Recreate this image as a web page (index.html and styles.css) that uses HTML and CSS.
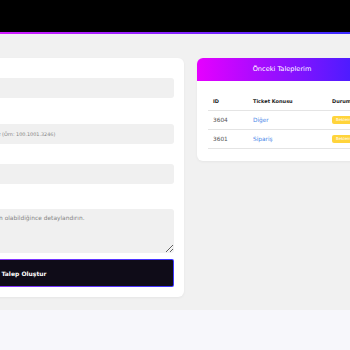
FILE: index.html
```html
<!DOCTYPE html>
<html lang="tr">
<head>
  <meta charset="UTF-8">
  <title>Destek Talepleri</title>
  <link rel="stylesheet" href="styles.css">
</head>
<body>
  <div class="topbar"></div>
  <div class="topbar-line"></div>

  <div class="section">
    <div class="row">
      <div class="card form-card">
        <div class="field">
          <div class="input"></div>
        </div>
        <div class="field field-sm">
          <input type="text" placeholder="Lütfen sipariş numaranızı buraya düzgün yazınız (Örn: 100.1001.3246)">
        </div>
        <div class="field field-md">
          <input type="text">
        </div>
        <div class="field field-xs">
          <textarea placeholder="Talebinizi ve yaşadığınız sorunu mümkün olabildiğince detaylandırın."></textarea>
        </div>
        <button class="btn-submit">Talep Oluştur</button>
      </div>

      <div class="card list-card">
        <div class="list-head">Önceki Taleplerim</div>
        <div class="list-body">
          <table>
            <tr>
              <th class="col-id">ID</th>
              <th class="col-subject">Ticket Konusu</th>
              <th>Durum</th>
            </tr>
            <tr>
              <td>3604</td>
              <td><a href="#">Diğer</a></td>
              <td><span class="badge">Beklemede</span></td>
            </tr>
            <tr>
              <td>3601</td>
              <td><a href="#">Sipariş</a></td>
              <td><span class="badge">Beklemede</span></td>
            </tr>
          </table>
        </div>
      </div>
    </div>
  </div>

  <div class="footer"></div>
</body>
</html>
```

FILE: styles.css
```css
body {
  margin: 0;
  font-family: 'DejaVu Sans', sans-serif;
  background-color: #f7f7fb;
  color: #333;
  overflow: hidden;
}

.topbar {
  height: 32px;
  background-color: #000;
}

.topbar-line {
  height: 2px;
  background: linear-gradient(90deg, #d21cff, #3a2bff);
}

.section {
  background-color: #f1f1f1;
  padding: 24px 0 13px;
}

/* page is wider than the window, form column starts off screen */
.row {
  display: flex;
  align-items: flex-start;
  gap: 13px;
  margin-left: -136px;
}

.card {
  background: #fff;
  border-radius: 6px;
  box-shadow: 0 1px 3px rgba(0, 0, 0, 0.05);
}

.form-card {
  width: 300px;
  flex-shrink: 0;
  padding: 20px 10px 10px;
}

.field {
  margin-bottom: 26px;
}

.field-sm { margin-bottom: 20px; }
.field-md { margin-bottom: 25px; }
.field-xs { margin-bottom: 6px; }

.input,
input[type="text"],
textarea {
  display: block;
  box-sizing: border-box;
  width: 100%;
  height: 20px;
  border: none;
  border-radius: 3px;
  background-color: #f0f0f0;
  padding: 0 8px;
  font-family: inherit;
  font-size: 4.9px;
  color: #333;
  outline: none;
}

textarea {
  height: 44px;
  padding: 6px 8px;
  font-size: 5.9px;
  resize: vertical;
}

input::placeholder,
textarea::placeholder {
  color: #858585;
}

.btn-submit {
  display: block;
  width: 100%;
  height: 28px;
  border: 1px solid transparent;
  border-radius: 2px;
  background:
    linear-gradient(#0f0c18, #0f0c18) padding-box,
    linear-gradient(90deg, #c436ff, #3b35ff) border-box;
  color: #fff;
  font-family: inherit;
  font-size: 6px;
  font-weight: bold;
}

.list-card {
  width: 170px;
  flex-shrink: 0;
  overflow: hidden;
}

.list-head {
  height: 23px;
  line-height: 23px;
  text-align: center;
  color: #fff;
  font-size: 6.6px;
  background: linear-gradient(90deg, #e600ff, #3d1fff);
}

.list-body {
  padding: 11px 11px 12px;
}

table {
  width: 100%;
  table-layout: fixed;
  border-collapse: collapse;
  font-size: 5.8px;
}

th,
td {
  text-align: left;
  padding: 0 5px;
  height: 18px;
  border-bottom: 1px solid #e4e4e4;
  white-space: nowrap;
}

th {
  font-size: 5px;
  font-weight: bold;
  color: #222;
}

td {
  color: #555;
}

.col-id { width: 30px; }
.col-subject { width: 69px; }

td a {
  color: #4a86e8;
  text-decoration: none;
}

.badge {
  display: inline-block;
  height: 8px;
  line-height: 8px;
  padding: 0 4px;
  border-radius: 2px;
  background-color: #ffd43b;
  color: #fff;
  font-size: 4px;
  vertical-align: middle;
}

.footer {
  height: 40px;
}
```
